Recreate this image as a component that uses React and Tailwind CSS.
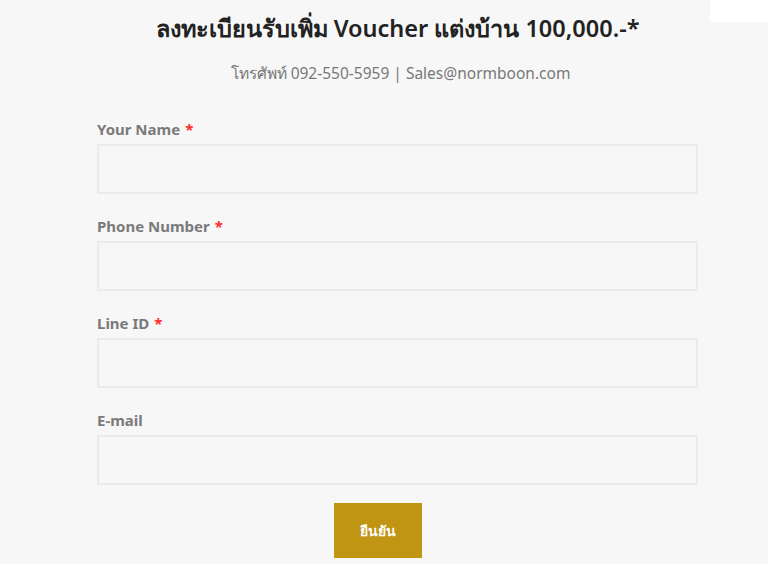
import React from "react";

const fields = [
  { label: "Your Name", req: true },
  { label: "Phone Number", req: true },
  { label: "Line ID", req: true },
  { label: "E-mail", req: false },
];

export default function App() {
  return (
    <div
      className="relative w-full h-[564px] bg-[#f7f7f7] overflow-hidden"
      style={{ fontFamily: '"Noto Sans", "Open Sans", sans-serif' }}
    >
      <div className="absolute top-0 right-0 w-[58px] h-[22px] bg-white" />
      <div className="ml-[97px] w-[601px] flex flex-col">
        <h1 className="mt-[12px] h-[32px] leading-[32px] text-center text-[23.5px] font-semibold text-[#222] whitespace-nowrap">
          ลงทะเบียนรับเพิ่ม Voucher แต่งบ้าน 100,000.-*
        </h1>
        <p className="mt-[18px] h-[22px] leading-[22px] text-center text-[15.5px] text-[#777] pl-[6px]">
          โทรศัพท์ 092-550-5959 | Sales@normboon.com
        </p>
        <div className="mt-[35px] flex flex-col gap-[22px]">
          {fields.map((f) => (
            <div key={f.label} className="flex flex-col">
              <label className="h-[20px] leading-[20px] text-[15px] font-bold text-[#7a7a7a]">
                {f.label}
                {f.req && <span className="text-[#ff2b2b] ml-[5px]">*</span>}
              </label>
              <div className="mt-[5px] h-[50px] border-2 border-[#ebebeb] bg-[#f7f7f7]" />
            </div>
          ))}
        </div>
        <div className="mt-[18px] flex justify-center pr-[40px]">
          <button className="w-[88px] h-[55px] bg-[#c09513] text-white text-[14px] font-bold">
            ยืนยัน
          </button>
        </div>
      </div>
    </div>
  );
}
